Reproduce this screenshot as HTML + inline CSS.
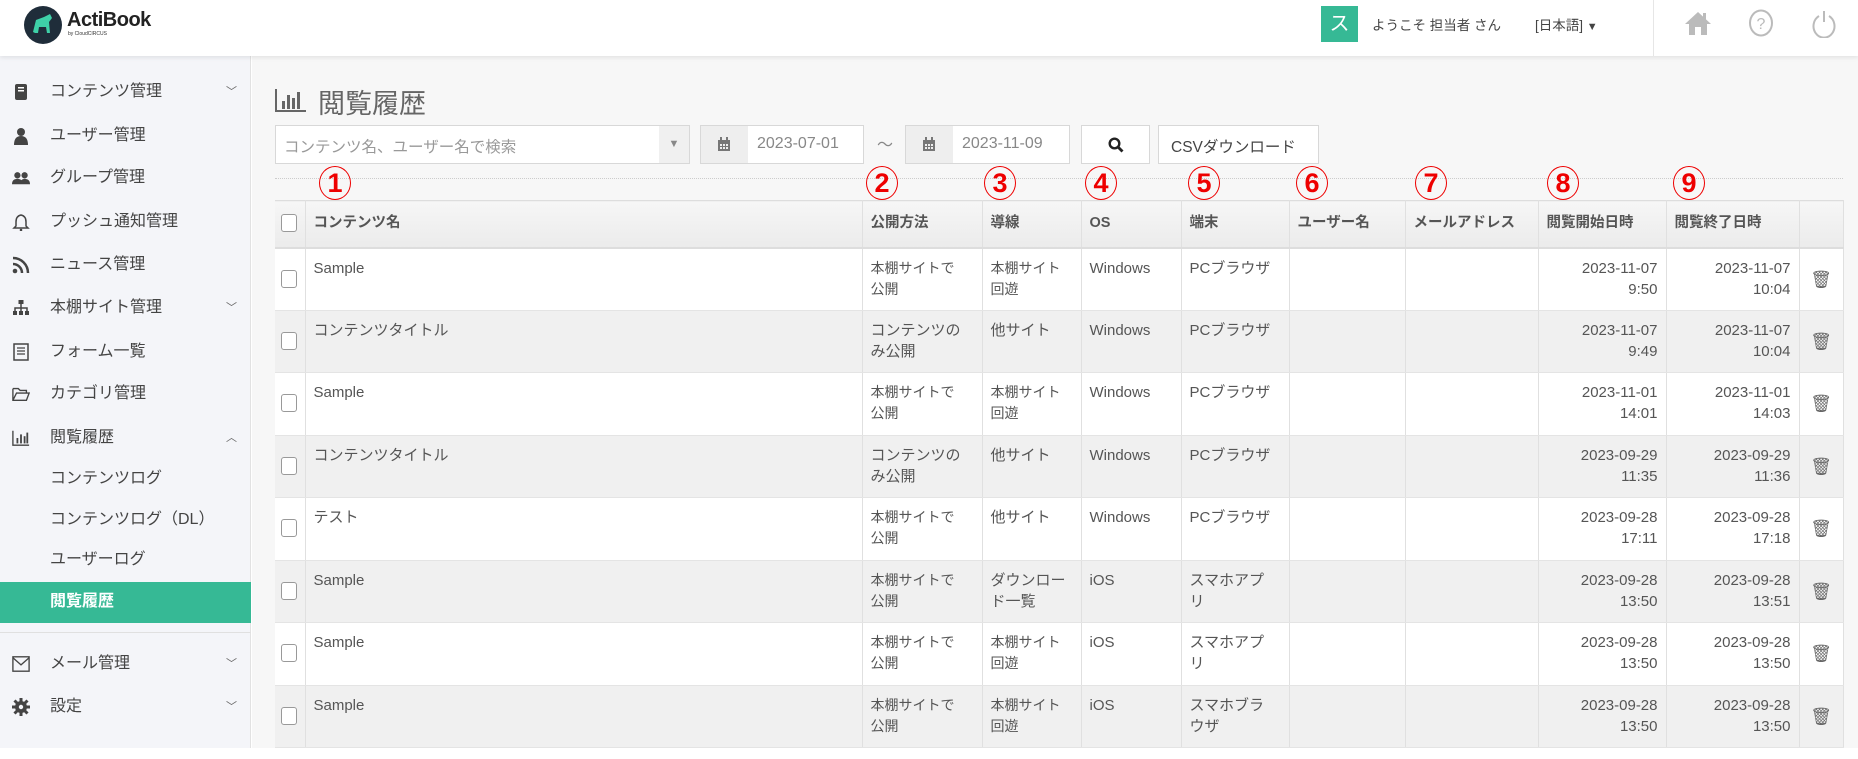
<!DOCTYPE html>
<html><head><meta charset="utf-8"><style>
*{box-sizing:border-box;margin:0;padding:0}
body{width:1858px;height:759px;overflow:hidden;background:#fff;font-family:"Liberation Sans","Noto Sans CJK JP",sans-serif;color:#555;font-size:15px;position:relative}
.hdr{position:absolute;left:0;top:0;width:1858px;height:56px;background:#fff;box-shadow:0 2px 4px rgba(0,0,0,.08);z-index:2}
.side{position:absolute;left:0;top:56px;width:251px;height:692px;background:#f4f5f9;border-right:1px solid #e2e2e2}
.main{position:absolute;left:252px;top:56px;width:1606px;height:692px;background:#f7f7f7}
.mi{position:absolute;left:0;width:251px;height:40px;line-height:40px;padding-left:50px;font-size:16px;color:#444}
.mi .ic{position:absolute;left:12px;top:11px;width:18px;height:18px}
.mi .ch{position:absolute;left:226px;top:0;font-size:11px;color:#666}
.abs{position:absolute}
table{border-collapse:collapse;position:absolute;left:275px;top:200px;width:1568px;table-layout:fixed;font-size:15px}
td,th{border-right:1px solid #e0e0e0;vertical-align:top;padding:9px 8px;color:#555;font-weight:normal;text-align:left;line-height:21px;overflow:hidden}
th{height:47px;vertical-align:middle;font-weight:bold;background:linear-gradient(#f6f6f6,#ebebeb);border-top:1px solid #ddd;border-bottom:2px solid #ddd;font-size:14.5px;color:#555;white-space:nowrap}
tr.r td{height:62.5px;border-bottom:1px solid #e4e4e4}
tr.r td:last-child{vertical-align:middle;text-align:center;font-size:17px;color:#666}
tr.g td{background:#f0f0f0}
tr.w td{background:#fff}
.cb{display:inline-block;width:16px;height:18px;border:1px solid #999;border-radius:3px;background:#fff;margin-top:12px}
th .cb{margin-top:0;vertical-align:middle}
td.sm{font-size:14px}
td.rt{text-align:right}
.num{position:absolute;top:166px;width:32px;height:34px;border:1.5px solid #e00;border-radius:50%;color:#e00;font-weight:bold;font-size:27px;line-height:33px;text-align:center}
.box{position:absolute;top:125px;height:39px;border:1px solid #d8d8d8;background:#fff}
</style></head><body>
<div class="hdr">
 <svg class="abs" style="left:24px;top:6px" width="38" height="38" viewBox="0 0 38 38"><circle cx="19" cy="19" r="19" fill="#1f2d3a"/><path d="M9 26 L12 14 L20 11 L26 8 L28 12 L25 16 L26 27 L23 27 L22 21 L15 21 L14 27 L11 27 Z" fill="#3ed1a8"/></svg>
 <div class="abs" style="left:67px;top:9px;font-size:20px;font-weight:bold;color:#222;letter-spacing:-0.5px">ActiBook</div>
 <div class="abs" style="left:68px;top:31px;font-size:5px;color:#333">by CloudCIRCUS</div>
 <div class="abs" style="left:1321px;top:6px;width:37px;height:36px;background:#36b995;color:#fff;font-size:20px;text-align:center;line-height:36px">ス</div>
 <div class="abs" style="left:1372px;top:14px;font-size:13.5px;color:#444">ようこそ 担当者 さん</div>
 <div class="abs" style="left:1535px;top:14px;font-size:13.5px;color:#444">[日本語] <span style="font-size:11px">▼</span></div>
 <div class="abs" style="left:1653px;top:0;width:1px;height:56px;background:#e6e6e6"></div>
 <svg class="abs" style="left:1684px;top:10px" width="28" height="26" viewBox="0 0 28 26"><path d="M14 2 L1 14 L5 14 L5 25 L11 25 L11 17 L17 17 L17 25 L23 25 L23 14 L27 14 Z" fill="#bbb"/><rect x="19" y="3" width="3" height="7" fill="#bbb"/></svg>
 <svg class="abs" style="left:1748px;top:9px" width="26" height="28" viewBox="0 0 26 28"><ellipse cx="13" cy="14" rx="11" ry="12.5" fill="none" stroke="#bbb" stroke-width="2"/><text x="13" y="20" text-anchor="middle" font-size="16" fill="#bbb" font-family="Liberation Sans">?</text></svg>
 <svg class="abs" style="left:1811px;top:8px" width="26" height="30" viewBox="0 0 26 30"><path d="M8 8 A10.5 11.5 0 1 0 18 8" fill="none" stroke="#bbb" stroke-width="2"/><line x1="13" y1="3" x2="13" y2="14" stroke="#bbb" stroke-width="2"/></svg>
</div>
<div class="side">
 <div class="mi" style="top:16px"><svg class="ic" viewBox="0 0 18 18"><rect x="3" y="1" width="12" height="16" rx="2" fill="#444"/><rect x="6" y="4" width="6" height="1.5" fill="#fff"/><rect x="6" y="7" width="6" height="1.5" fill="#fff"/></svg>コンテンツ管理<span class="ch">﹀</span></div>
 <div class="mi" style="top:60px"><svg class="ic" viewBox="0 0 18 18"><circle cx="9" cy="5" r="4" fill="#444"/><path d="M2 18 Q2 9 9 9 Q16 9 16 18Z" fill="#444"/></svg>ユーザー管理</div>
 <div class="mi" style="top:102px"><svg class="ic" viewBox="0 0 20 18"><circle cx="6" cy="6" r="3.5" fill="#444"/><circle cx="14" cy="6" r="3.5" fill="#444"/><path d="M0 16 Q0 10 6 10 Q12 10 12 16Z M9 16 Q9 10 14 10 Q20 10 20 16Z" fill="#444"/></svg>グループ管理</div>
 <div class="mi" style="top:146px"><svg class="ic" viewBox="0 0 18 18"><path d="M9 2 Q4 3 4 9 L4 13 L2 15 L16 15 L14 13 L14 9 Q14 3 9 2Z" fill="none" stroke="#444" stroke-width="1.5"/><circle cx="9" cy="17" r="1.3" fill="#444"/></svg>プッシュ通知管理</div>
 <div class="mi" style="top:189px"><svg class="ic" viewBox="0 0 18 18"><circle cx="3" cy="15" r="2.3" fill="#444"/><path d="M1 8 A9 9 0 0 1 10 17" fill="none" stroke="#444" stroke-width="2.5"/><path d="M1 2 A15 15 0 0 1 16 17" fill="none" stroke="#444" stroke-width="2.5"/></svg>ニュース管理</div>
 <div class="mi" style="top:232px"><svg class="ic" viewBox="0 0 18 18"><rect x="6.5" y="1" width="5" height="4" fill="#444"/><path d="M9 5V9M3 13V9H15V13M9 9V13" stroke="#444" stroke-width="1.5" fill="none"/><rect x="1" y="12" width="4" height="4" fill="#444"/><rect x="7" y="12" width="4" height="4" fill="#444"/><rect x="13" y="12" width="4" height="4" fill="#444"/></svg>本棚サイト管理<span class="ch">﹀</span></div>
 <div class="mi" style="top:276px"><svg class="ic" viewBox="0 0 18 18"><rect x="2" y="1" width="14" height="16" fill="none" stroke="#444" stroke-width="1.5"/><path d="M5 5H13M5 8H13M5 11H13" stroke="#444" stroke-width="1.2"/></svg>フォーム一覧</div>
 <div class="mi" style="top:318px"><svg class="ic" viewBox="0 0 20 18"><path d="M1 3H7L9 5H16V8M1 3V16H16L19 8H5L1 16" fill="none" stroke="#444" stroke-width="1.5"/></svg>カテゴリ管理</div>
 <div class="mi" style="top:362px"><svg class="ic" viewBox="0 0 20 18"><path d="M1 1V17H19" fill="none" stroke="#444" stroke-width="1.5"/><rect x="5" y="9" width="2" height="6" fill="#444"/><rect x="9" y="5" width="2" height="10" fill="#444"/><rect x="13" y="7" width="2" height="8" fill="#444"/><rect x="16" y="3" width="2" height="12" fill="#444"/></svg>閲覧履歴<span class="ch">︿</span></div>
 <div class="mi" style="top:403px">コンテンツログ</div>
 <div class="mi" style="top:444px">コンテンツログ（DL）</div>
 <div class="mi" style="top:484px">ユーザーログ</div>
 <div class="mi" style="top:526px;height:41px;background:#36b995;color:#fff;font-weight:bold">閲覧履歴</div>
 <div class="abs" style="left:0;top:576px;width:251px;height:1px;background:#e0e0e0"></div>
 <div class="mi" style="top:588px"><svg class="ic" viewBox="0 0 20 18"><rect x="1" y="1" width="18" height="16" fill="none" stroke="#444" stroke-width="1.5"/><path d="M1 2L10 10L19 2" fill="none" stroke="#444" stroke-width="1.5"/></svg>メール管理<span class="ch">﹀</span></div>
 <div class="mi" style="top:631px"><svg class="ic" viewBox="0 0 18 18"><circle cx="9" cy="9" r="6" fill="#444"/><g stroke="#444" stroke-width="3"><path d="M9 0V18M0 9H18M2.5 2.5L15.5 15.5M15.5 2.5L2.5 15.5"/></g><circle cx="9" cy="9" r="2.2" fill="#f4f5f9"/></svg>設定<span class="ch">﹀</span></div>
</div>
<div class="main"></div>
<svg class="abs" style="left:275px;top:88px" width="32" height="24" viewBox="0 0 32 24"><path d="M1 1V23H31" fill="none" stroke="#666" stroke-width="2"/><rect x="7" y="13" width="3" height="8" fill="#666"/><rect x="12" y="7" width="3" height="14" fill="#666"/><rect x="17" y="10" width="3" height="11" fill="#666"/><rect x="22" y="4" width="3" height="17" fill="#666"/></svg>
<div class="abs" style="left:318px;top:82px;font-size:27px;color:#666">閲覧履歴</div>
<div class="box" style="left:275px;width:415px"><span class="abs" style="left:8px;top:9px;color:#999;font-size:15.5px">コンテンツ名、ユーザー名で検索</span><div class="abs" style="right:0;top:0;width:30px;height:37px;background:#f0f0f0;color:#888;font-size:11px;text-align:center;line-height:37px">▼</div></div>
<div class="box" style="left:700px;width:164px"><div class="abs" style="left:0;top:0;width:47px;height:37px;background:#eee"><svg class="abs" style="left:16px;top:11px" width="14" height="15" viewBox="0 0 14 15"><rect x="1" y="3" width="12" height="11" fill="#777"/><g fill="#eee"><rect x="3" y="7" width="2" height="2"/><rect x="6" y="7" width="2" height="2"/><rect x="9" y="7" width="2" height="2"/><rect x="3" y="10" width="2" height="2"/><rect x="6" y="10" width="2" height="2"/><rect x="9" y="10" width="2" height="2"/></g><rect x="3" y="0" width="2" height="4" fill="#777"/><rect x="9" y="0" width="2" height="4" fill="#777"/></svg></div><span class="abs" style="left:56px;top:9px;color:#888;font-size:16px">2023-07-01</span></div>
<div class="abs" style="left:877px;top:131px;color:#888;font-size:16px">～</div>
<div class="box" style="left:905px;width:165px"><div class="abs" style="left:0;top:0;width:47px;height:37px;background:#eee"><svg class="abs" style="left:16px;top:11px" width="14" height="15" viewBox="0 0 14 15"><rect x="1" y="3" width="12" height="11" fill="#777"/><g fill="#eee"><rect x="3" y="7" width="2" height="2"/><rect x="6" y="7" width="2" height="2"/><rect x="9" y="7" width="2" height="2"/><rect x="3" y="10" width="2" height="2"/><rect x="6" y="10" width="2" height="2"/><rect x="9" y="10" width="2" height="2"/></g><rect x="3" y="0" width="2" height="4" fill="#777"/><rect x="9" y="0" width="2" height="4" fill="#777"/></svg></div><span class="abs" style="left:56px;top:9px;color:#888;font-size:16px">2023-11-09</span></div>
<div class="box" style="left:1081px;width:69px"><svg class="abs" style="left:26px;top:11px" width="16" height="16" viewBox="0 0 16 16"><circle cx="6.5" cy="6.5" r="4.8" fill="none" stroke="#222" stroke-width="2.4"/><path d="M10 10L14.5 14.5" stroke="#222" stroke-width="2.8"/></svg></div>
<div class="box" style="left:1158px;width:161px"><span class="abs" style="left:12px;top:9px;color:#444;font-size:15.5px">CSVダウンロード</span></div>
<div class="abs" style="left:275px;top:178px;width:1568px;border-top:1px dotted #ccc"></div>
<div class="num" style="left:319px">1</div><div class="num" style="left:866px">2</div><div class="num" style="left:984px">3</div><div class="num" style="left:1085px">4</div><div class="num" style="left:1188px">5</div><div class="num" style="left:1296px">6</div><div class="num" style="left:1415px">7</div><div class="num" style="left:1547px">8</div><div class="num" style="left:1673px">9</div>
<table>
<colgroup><col style="width:30px"><col style="width:557px"><col style="width:120px"><col style="width:99px"><col style="width:100px"><col style="width:108px"><col style="width:116px"><col style="width:133px"><col style="width:128px"><col style="width:133px"><col style="width:44px"></colgroup>
<tr><th style="padding:0 6px"><span class="cb" style="margin:0"></span></th><th>コンテンツ名</th><th>公開方法</th><th>導線</th><th>OS</th><th>端末</th><th>ユーザー名</th><th>メールアドレス</th><th>閲覧開始日時</th><th>閲覧終了日時</th><th></th></tr>
<tr class="r w"><td style="padding:9px 6px"><span class="cb"></span></td><td>Sample</td><td class="sm">本棚サイトで<br>公開</td><td class="sm">本棚サイト<br>回遊</td><td>Windows</td><td>PCブラウザ</td><td></td><td></td><td class="rt">2023-11-07<br>9:50</td><td class="rt">2023-11-07<br>10:04</td><td>🗑</td></tr>
<tr class="r g"><td style="padding:9px 6px"><span class="cb"></span></td><td>コンテンツタイトル</td><td>コンテンツの<br>み公開</td><td>他サイト</td><td>Windows</td><td>PCブラウザ</td><td></td><td></td><td class="rt">2023-11-07<br>9:49</td><td class="rt">2023-11-07<br>10:04</td><td>🗑</td></tr>
<tr class="r w"><td style="padding:9px 6px"><span class="cb"></span></td><td>Sample</td><td class="sm">本棚サイトで<br>公開</td><td class="sm">本棚サイト<br>回遊</td><td>Windows</td><td>PCブラウザ</td><td></td><td></td><td class="rt">2023-11-01<br>14:01</td><td class="rt">2023-11-01<br>14:03</td><td>🗑</td></tr>
<tr class="r g"><td style="padding:9px 6px"><span class="cb"></span></td><td>コンテンツタイトル</td><td>コンテンツの<br>み公開</td><td>他サイト</td><td>Windows</td><td>PCブラウザ</td><td></td><td></td><td class="rt">2023-09-29<br>11:35</td><td class="rt">2023-09-29<br>11:36</td><td>🗑</td></tr>
<tr class="r w"><td style="padding:9px 6px"><span class="cb"></span></td><td>テスト</td><td class="sm">本棚サイトで<br>公開</td><td>他サイト</td><td>Windows</td><td>PCブラウザ</td><td></td><td></td><td class="rt">2023-09-28<br>17:11</td><td class="rt">2023-09-28<br>17:18</td><td>🗑</td></tr>
<tr class="r g"><td style="padding:9px 6px"><span class="cb"></span></td><td>Sample</td><td class="sm">本棚サイトで<br>公開</td><td>ダウンロー<br>ド一覧</td><td>iOS</td><td>スマホアプ<br>リ</td><td></td><td></td><td class="rt">2023-09-28<br>13:50</td><td class="rt">2023-09-28<br>13:51</td><td>🗑</td></tr>
<tr class="r w"><td style="padding:9px 6px"><span class="cb"></span></td><td>Sample</td><td class="sm">本棚サイトで<br>公開</td><td class="sm">本棚サイト<br>回遊</td><td>iOS</td><td>スマホアプ<br>リ</td><td></td><td></td><td class="rt">2023-09-28<br>13:50</td><td class="rt">2023-09-28<br>13:50</td><td>🗑</td></tr>
<tr class="r g"><td style="padding:9px 6px"><span class="cb"></span></td><td>Sample</td><td class="sm">本棚サイトで<br>公開</td><td class="sm">本棚サイト<br>回遊</td><td>iOS</td><td>スマホブラ<br>ウザ</td><td></td><td></td><td class="rt">2023-09-28<br>13:50</td><td class="rt">2023-09-28<br>13:50</td><td>🗑</td></tr>
</table>
<div class="abs" style="left:0;top:748px;width:1858px;height:11px;background:#fff"></div>
</body></html>
